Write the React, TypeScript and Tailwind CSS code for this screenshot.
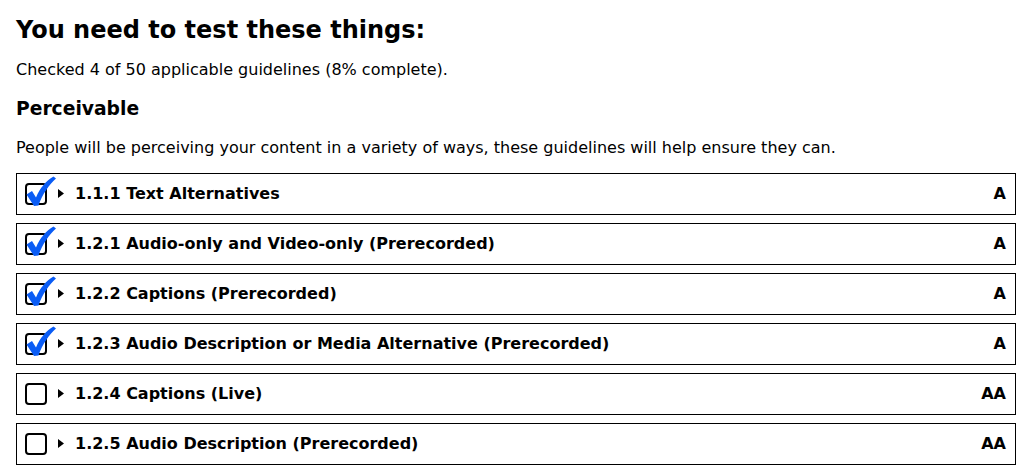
import React from "react";

type Item = { title: string; level: string; checked: boolean };

const items: Item[] = [
  { title: "1.1.1 Text Alternatives", level: "A", checked: true },
  { title: "1.2.1 Audio-only and Video-only (Prerecorded)", level: "A", checked: true },
  { title: "1.2.2 Captions (Prerecorded)", level: "A", checked: true },
  { title: "1.2.3 Audio Description or Media Alternative (Prerecorded)", level: "A", checked: true },
  { title: "1.2.4 Captions (Live)", level: "AA", checked: false },
  { title: "1.2.5 Audio Description (Prerecorded)", level: "AA", checked: false },
];

function Check() {
  return (
    <svg
      className="absolute left-[0px] top-[-7px] w-[32px] h-[32px] pointer-events-none"
      viewBox="0 0 32 32"
    >
      <path
        d="M1.5 18.5 L7 15 L11 21.5 C15 12 21 5 28.5 0.5 L31 2.5 C24 9 17.5 18 13.5 29.5 L9 30 Z"
        fill="#0a5cf5"
      />
    </svg>
  );
}

function Row({ item }: { item: Item }) {
  return (
    <div className="flex items-center h-[42px] border border-black pl-2 pr-[9px]">
      <div className="relative w-[22px] h-[22px] shrink-0">
        <div className="w-[22px] h-[22px] border-2 border-black rounded-[4px]" />
        {item.checked && <Check />}
      </div>
      <svg className="ml-[11px] mb-[2px] w-[6px] h-[9px] shrink-0" viewBox="0 0 6 9">
        <path d="M0 0 L6 4.5 L0 9 Z" fill="#000" />
      </svg>
      <span className="ml-[11px] mb-[1px] font-bold text-[16px] leading-[20px]">{item.title}</span>
      <span className="ml-auto mb-[1px] font-bold text-[16px] leading-[20px]">{item.level}</span>
    </div>
  );
}

export default function App() {
  return (
    <div
      className="bg-white text-black min-h-screen pl-4 pr-[7px] pt-4"
      style={{ fontFamily: '"DejaVu Sans", Verdana, sans-serif' }}
    >
      <h2 className="text-[24px] leading-[28px] font-bold">You need to test these things:</h2>
      <p className="mt-4 text-[16px] leading-[20px]">
        Checked 4 of 50 applicable guidelines (8% complete).
      </p>
      <h3 className="mt-[17px] text-[18.72px] leading-[24px] font-bold">Perceivable</h3>
      <p className="mt-[17px] text-[16px] leading-[20px]">
        People will be perceiving your content in a variety of ways, these guidelines will help ensure they can.
      </p>
      <div className="mt-[15px] flex flex-col gap-2">
        {items.map((it) => (
          <Row key={it.title} item={it} />
        ))}
      </div>
    </div>
  );
}
